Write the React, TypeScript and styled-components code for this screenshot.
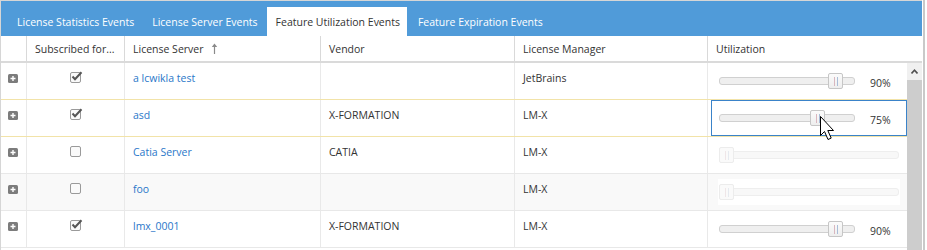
import React from 'react';
import styled, { createGlobalStyle } from 'styled-components';

const Global = createGlobalStyle`
  html, body { margin: 0; padding: 0; background: #fff; }
  body {
    font-family: "Open Sans", "Noto Sans", sans-serif;
    font-size: 10.5px;
    color: #333;
  }
  #root { width: 927px; height: 250px; overflow: hidden; }
`;

const Page = styled.div`
  position: relative;
  width: 925px;
  height: 250px;
  box-sizing: border-box;
  padding-right: 1px;
  border-right: 2px solid #c9c9c9;
`;

const Widget = styled.div`
  display: flex;
  flex-direction: column;
  border-top: 1px solid #d6d6d6;
  border-left: 1px solid #d6d6d6;
`;

const TabBar = styled.div`
  height: 35px;
  background: #509bd9;
  display: flex;
  align-items: flex-end;
  gap: 2px;
  padding-left: 7px;
`;

const Tab = styled.div<{ $active?: boolean }>`
  height: 29px;
  box-sizing: border-box;
  padding: 1px 7px 0 9px;
  display: flex;
  align-items: center;
  white-space: nowrap;
  color: ${(p) => (p.$active ? '#333' : '#fff')};
  background: ${(p) => (p.$active ? '#fff' : 'transparent')};
`;

const COLS = '25px 98px 196px 194px 193px';

const HeaderRow = styled.div`
  display: grid;
  grid-template-columns: ${COLS} 1fr;
  height: 25px;
  border-bottom: 2px solid #dadada;
`;

const HeaderCell = styled.div<{ $first?: boolean }>`
  display: flex;
  align-items: center;
  padding-left: 8px;
  border-left: ${(p) => (p.$first ? 'none' : '1px solid #d9d9d9')};
  color: #333;
  white-space: nowrap;
  overflow: hidden;
`;

const SortIcon = styled.svg`
  margin-left: 7px;
  flex: none;
`;

const Body = styled.div`
  display: flex;
`;

const Rows = styled.div`
  width: 906px;
  display: flex;
  flex-direction: column;
`;

const Row = styled.div<{ $alt?: boolean; $line: string }>`
  display: grid;
  grid-template-columns: ${COLS} 200px;
  height: 37px;
  box-sizing: border-box;
  border-bottom: 1px solid ${(p) => p.$line};
  background: ${(p) => (p.$alt ? '#f9f9f9' : '#fff')};
`;

const Cell = styled.div<{ $first?: boolean }>`
  position: relative;
  border-left: ${(p) => (p.$first ? 'none' : '1px solid #e9e9e9')};
  padding: 8px 8px 0 8px;
  line-height: 14px;
  white-space: nowrap;
  overflow: hidden;
`;

const ExpandCell = styled(Cell)`
  padding: 9px 0 0 7px;
`;

const CheckCell = styled(Cell)`
  display: flex;
  justify-content: center;
  padding: 7px 0 0 0;
`;

const LinkText = styled.span`
  color: #2a77c9;
`;

const SliderCell = styled(Cell)<{ $focused?: boolean }>`
  display: flex;
  align-items: center;
  padding: 0 0 0 10px;
  &::after {
    content: '';
    display: ${(p) => (p.$focused ? 'block' : 'none')};
    position: absolute;
    top: 0;
    bottom: 0;
    left: 3px;
    right: 0;
    border: 1px solid #3a83c9;
  }
`;

const SliderBox = styled.div`
  width: 182px;
  height: 26px;
  box-sizing: border-box;
  padding: 0 1px;
  background: #fff;
  display: flex;
  align-items: center;
  gap: 15px;
`;

const Track = styled.div<{ $disabled?: boolean }>`
  position: relative;
  flex: none;
  width: ${(p) => (p.$disabled ? '180px' : '136px')};
  height: 8px;
  box-sizing: border-box;
  border-radius: 3px;
  border: 1px solid ${(p) => (p.$disabled ? '#eeeeee' : '#d0d0d0')};
  background: ${(p) => (p.$disabled ? '#f8f8f8' : '#efefef')};
`;

const Handle = styled.div<{ $disabled?: boolean }>`
  position: absolute;
  top: -5px;
  width: 15px;
  height: 16px;
  box-sizing: border-box;
  border-radius: 2px;
  border: 1px solid ${(p) => (p.$disabled ? '#ececec' : '#c6c6c6')};
  background: ${(p) => (p.$disabled ? '#fafafa' : 'linear-gradient(#fbfbfb, #eeeeee)')};
  display: flex;
  justify-content: center;
  align-items: center;
  gap: 2px;
  &::before,
  &::after {
    content: '';
    width: 1px;
    height: 9px;
  }
  &::before {
    background: ${(p) => (p.$disabled ? '#efe6e8' : '#d9b7bf')};
  }
  &::after {
    background: ${(p) => (p.$disabled ? '#e6eaf0' : '#a9bdd8')};
  }
`;

const Percent = styled.span`
  color: #333;
  padding-top: 3px;
`;

const Scrollbar = styled.div`
  width: 15px;
  height: 187px;
  background: #cdcdcd;
  display: flex;
  flex-direction: column;
`;

const ScrollButton = styled.div`
  height: 17px;
  background: #f0f0f0;
  display: flex;
  align-items: center;
  justify-content: center;
`;

const Cursor = styled.svg`
  position: absolute;
  left: 820px;
  top: 116px;
`;

const PlusIcon = () => (
  <svg width="10" height="9" viewBox="0 0 10 9">
    <rect x="0" y="0" width="10" height="9" rx="1.5" fill="#7c7c7c" />
    <path d="M2.5 4.5H7.5M5 2V7" stroke="#fff" strokeWidth="1.4" />
  </svg>
);

const CheckBox = ({ checked }: { checked: boolean }) => (
  <svg width="14" height="13" viewBox="0 0 14 13">
    <rect x="1.5" y="2.5" width="10" height="10" rx="1.5" fill="#fafafa" stroke="#9a9a9a" />
    {checked && <path d="M3.5 6.5L6 9.2L12.5 2.2" fill="none" stroke="#555" strokeWidth="2" />}
  </svg>
);

type RowData = {
  checked: boolean;
  server: string;
  vendor: string;
  manager: string;
  value: number | null;
};

const rows: RowData[] = [
  { checked: true, server: 'a lcwikla test', vendor: '', manager: 'JetBrains', value: 90 },
  { checked: true, server: 'asd', vendor: 'X-FORMATION', manager: 'LM-X', value: 75 },
  { checked: false, server: 'Catia Server', vendor: 'CATIA', manager: 'LM-X', value: null },
  { checked: false, server: 'foo', vendor: '', manager: 'LM-X', value: null },
  { checked: true, server: 'lmx_0001', vendor: 'X-FORMATION', manager: 'LM-X', value: 90 },
];

const Slider = ({ value }: { value: number | null }) => {
  const disabled = value === null;
  const trackW = disabled ? 180 : 136;
  const left = disabled ? -1 : Math.round((value as number) / 100 * (trackW - 15)) - 1;
  return (
    <SliderBox>
      <Track $disabled={disabled}>
        <Handle $disabled={disabled} style={{ left }} />
      </Track>
      {!disabled && <Percent>{value}%</Percent>}
    </SliderBox>
  );
};

export default function App() {
  const lineFor = (i: number) => (i === 0 || i === 1 ? '#f2e3a8' : '#e8e8e8');
  return (
    <Page>
      <Global />
      <Widget>
        <TabBar>
          <Tab>License Statistics Events</Tab>
          <Tab>License Server Events</Tab>
          <Tab $active>Feature Utilization Events</Tab>
          <Tab>Feature Expiration Events</Tab>
        </TabBar>
        <HeaderRow>
          <HeaderCell $first />
          <HeaderCell>Subscribed for...</HeaderCell>
          <HeaderCell>
            License Server
            <SortIcon width="7" height="11" viewBox="0 0 7 11">
              <path d="M3.5 2.5V11" stroke="#8a8a8a" strokeWidth="1.2" />
              <path d="M0.8 4L3.5 0.5L6.2 4Z" fill="#8a8a8a" />
            </SortIcon>
          </HeaderCell>
          <HeaderCell>Vendor</HeaderCell>
          <HeaderCell>License Manager</HeaderCell>
          <HeaderCell>Utilization</HeaderCell>
        </HeaderRow>
        <Body>
          <Rows>
            {rows.map((r, i) => (
              <Row key={r.server} $alt={i === 3} $line={lineFor(i)}>
                <ExpandCell $first>
                  <PlusIcon />
                </ExpandCell>
                <CheckCell>
                  <CheckBox checked={r.checked} />
                </CheckCell>
                <Cell>
                  <LinkText>{r.server}</LinkText>
                </Cell>
                <Cell>{r.vendor}</Cell>
                <Cell>{r.manager}</Cell>
                <SliderCell $focused={i === 1}>
                  <Slider value={r.value} />
                </SliderCell>
              </Row>
            ))}
          </Rows>
          <Scrollbar>
            <ScrollButton>
              <svg width="7" height="5" viewBox="0 0 7 5">
                <path d="M0.5 4.5L3.5 1.2L6.5 4.5" fill="none" stroke="#505050" strokeWidth="1.6" />
              </svg>
            </ScrollButton>
          </Scrollbar>
        </Body>
      </Widget>
      <Cursor width="15" height="26" viewBox="0 0 15 26">
        <path d="M0.5 0.5V19.5L4.5 15.5L8 23.5L11.2 22.1L7.8 14.5H13.5Z" fill="#fff" stroke="#000" strokeWidth="1" strokeLinejoin="miter" />
      </Cursor>
    </Page>
  );
}
